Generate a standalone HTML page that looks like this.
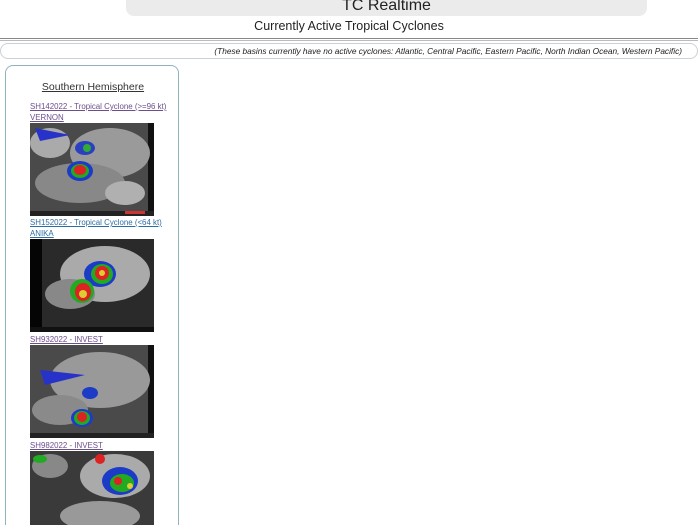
<!DOCTYPE html>
<html><head><meta charset="utf-8"><style>
*{margin:0;padding:0;box-sizing:border-box}
html,body{width:698px;height:525px;overflow:hidden}
body{background:#fff;font-family:"Liberation Sans",sans-serif;color:#222}
#w{position:relative;width:698px;height:525px;overflow:hidden}
.bar{position:absolute;left:126px;top:-6px;width:521px;height:22px;background:#ebebeb;border-radius:0 0 8px 8px;text-align:center;font-size:16px;line-height:24px;color:#222}
.sub{position:absolute;left:0;width:698px;top:18px;text-align:center;font-size:12.5px;line-height:16px}
.hr{position:absolute;left:0;top:38px;width:698px;height:3px;border-top:1px solid #888;border-bottom:1px solid #bbb}
.pill{position:absolute;left:0;top:43px;width:698px;height:16px;border:1px solid #c8d2da;border-radius:8px;text-align:right;padding-right:15px;font-size:8.3px;font-style:italic;line-height:14px;color:#222}
.panel{position:absolute;left:5px;top:65px;width:174px;height:460px;border:1px solid #8fb3bd;border-bottom:none;border-radius:8px 8px 0 0}
.h{position:absolute;left:0;width:174px;top:15px;text-align:center;font-size:10.5px;text-decoration:underline;color:#333}
a{position:absolute;left:24px;font-size:7.9px;line-height:10.5px;text-decoration:underline;white-space:nowrap}
svg{position:absolute;left:24px}
</style></head><body><div id="w">
<div class="bar">TC Realtime</div>
<div class="sub">Currently Active Tropical Cyclones</div>
<div class="hr"></div>
<div class="pill">(These basins currently have no active cyclones: Atlantic, Central Pacific, Eastern Pacific, North Indian Ocean, Western Pacific)</div>
<div class="panel">
<div class="h">Southern Hemisphere</div>
<a style="top:36px;color:#6b4f8c">SH142022 - Tropical Cyclone (&gt;=96 kt)<br>VERNON</a>
<svg style="top:57px" width="124" height="93" viewBox="0 0 124 93"><rect width="124" height="93" fill="#4a4a4a"/><rect x="118" width="6" height="93" fill="#111"/>
<ellipse cx="80" cy="30" rx="40" ry="25" fill="#9a9a9a"/><ellipse cx="50" cy="60" rx="45" ry="20" fill="#888"/><ellipse cx="20" cy="20" rx="20" ry="15" fill="#aaa"/><ellipse cx="95" cy="70" rx="20" ry="12" fill="#b0b0b0"/>
<path d="M5 5 L40 12 L10 18Z" fill="#2733c8"/><ellipse cx="55" cy="25" rx="10" ry="7" fill="#2a40c0"/><ellipse cx="57" cy="25" rx="4" ry="4" fill="#3a3"/>
<ellipse cx="50" cy="48" rx="13" ry="10" fill="#1c3cc8"/><ellipse cx="50" cy="48" rx="9" ry="7" fill="#2a2"/><ellipse cx="50" cy="47" rx="6" ry="5" fill="#d22"/>
<rect y="88" width="124" height="5" fill="#222"/><rect x="95" y="88" width="20" height="3" fill="#c33"/></svg>
<a style="top:152px;color:#2e6da4">SH152022 - Tropical Cyclone (&lt;64 kt)<br>ANIKA</a>
<svg style="top:173px" width="124" height="93" viewBox="0 0 124 93"><rect width="124" height="93" fill="#2a2a2a"/><rect width="12" height="93" fill="#050505"/>
<ellipse cx="75" cy="35" rx="45" ry="28" fill="#aaa"/><ellipse cx="40" cy="55" rx="25" ry="15" fill="#888"/>
<ellipse cx="70" cy="35" rx="16" ry="13" fill="#1c3cc8"/><ellipse cx="72" cy="35" rx="11" ry="10" fill="#2a2"/><ellipse cx="72" cy="34" rx="7" ry="7" fill="#d22"/><circle cx="72" cy="34" r="3" fill="#dc3"/>
<ellipse cx="52" cy="52" rx="12" ry="12" fill="#2a2"/><ellipse cx="53" cy="53" rx="8" ry="9" fill="#d22"/><circle cx="53" cy="55" r="4" fill="#dc3"/>
<rect y="88" width="124" height="5" fill="#111"/></svg>
<a style="top:269px;color:#6b4f8c">SH932022 - INVEST</a>
<svg style="top:279px" width="124" height="93" viewBox="0 0 124 93"><rect width="124" height="93" fill="#4a4a4a"/><rect x="118" width="6" height="93" fill="#111"/>
<ellipse cx="70" cy="35" rx="50" ry="28" fill="#999"/><ellipse cx="30" cy="65" rx="28" ry="15" fill="#8a8a8a"/>
<path d="M10 25 L55 30 L15 40Z" fill="#2733c8"/><ellipse cx="60" cy="48" rx="8" ry="6" fill="#1c3cc8"/>
<ellipse cx="52" cy="73" rx="11" ry="9" fill="#1c3cc8"/><ellipse cx="52" cy="73" rx="8" ry="7" fill="#2a2"/><ellipse cx="52" cy="72" rx="5" ry="5" fill="#d22"/>
<rect y="88" width="124" height="5" fill="#222"/></svg>
<a style="top:375px;color:#6b4f8c">SH982022 - INVEST</a>
<svg style="top:385px" width="124" height="74" viewBox="0 0 124 74"><rect width="124" height="74" fill="#3a3a3a"/>
<ellipse cx="85" cy="25" rx="35" ry="22" fill="#aaa"/><ellipse cx="20" cy="15" rx="18" ry="12" fill="#888"/><ellipse cx="70" cy="65" rx="40" ry="15" fill="#999"/>
<ellipse cx="90" cy="30" rx="18" ry="14" fill="#1c3cc8"/><ellipse cx="92" cy="32" rx="12" ry="9" fill="#2a2"/><circle cx="88" cy="30" r="4" fill="#d22"/><circle cx="100" cy="35" r="3" fill="#dc3"/>
<ellipse cx="70" cy="8" rx="5" ry="5" fill="#d22"/><ellipse cx="10" cy="8" rx="7" ry="4" fill="#2a2"/></svg>
</div>
</div></body></html>
